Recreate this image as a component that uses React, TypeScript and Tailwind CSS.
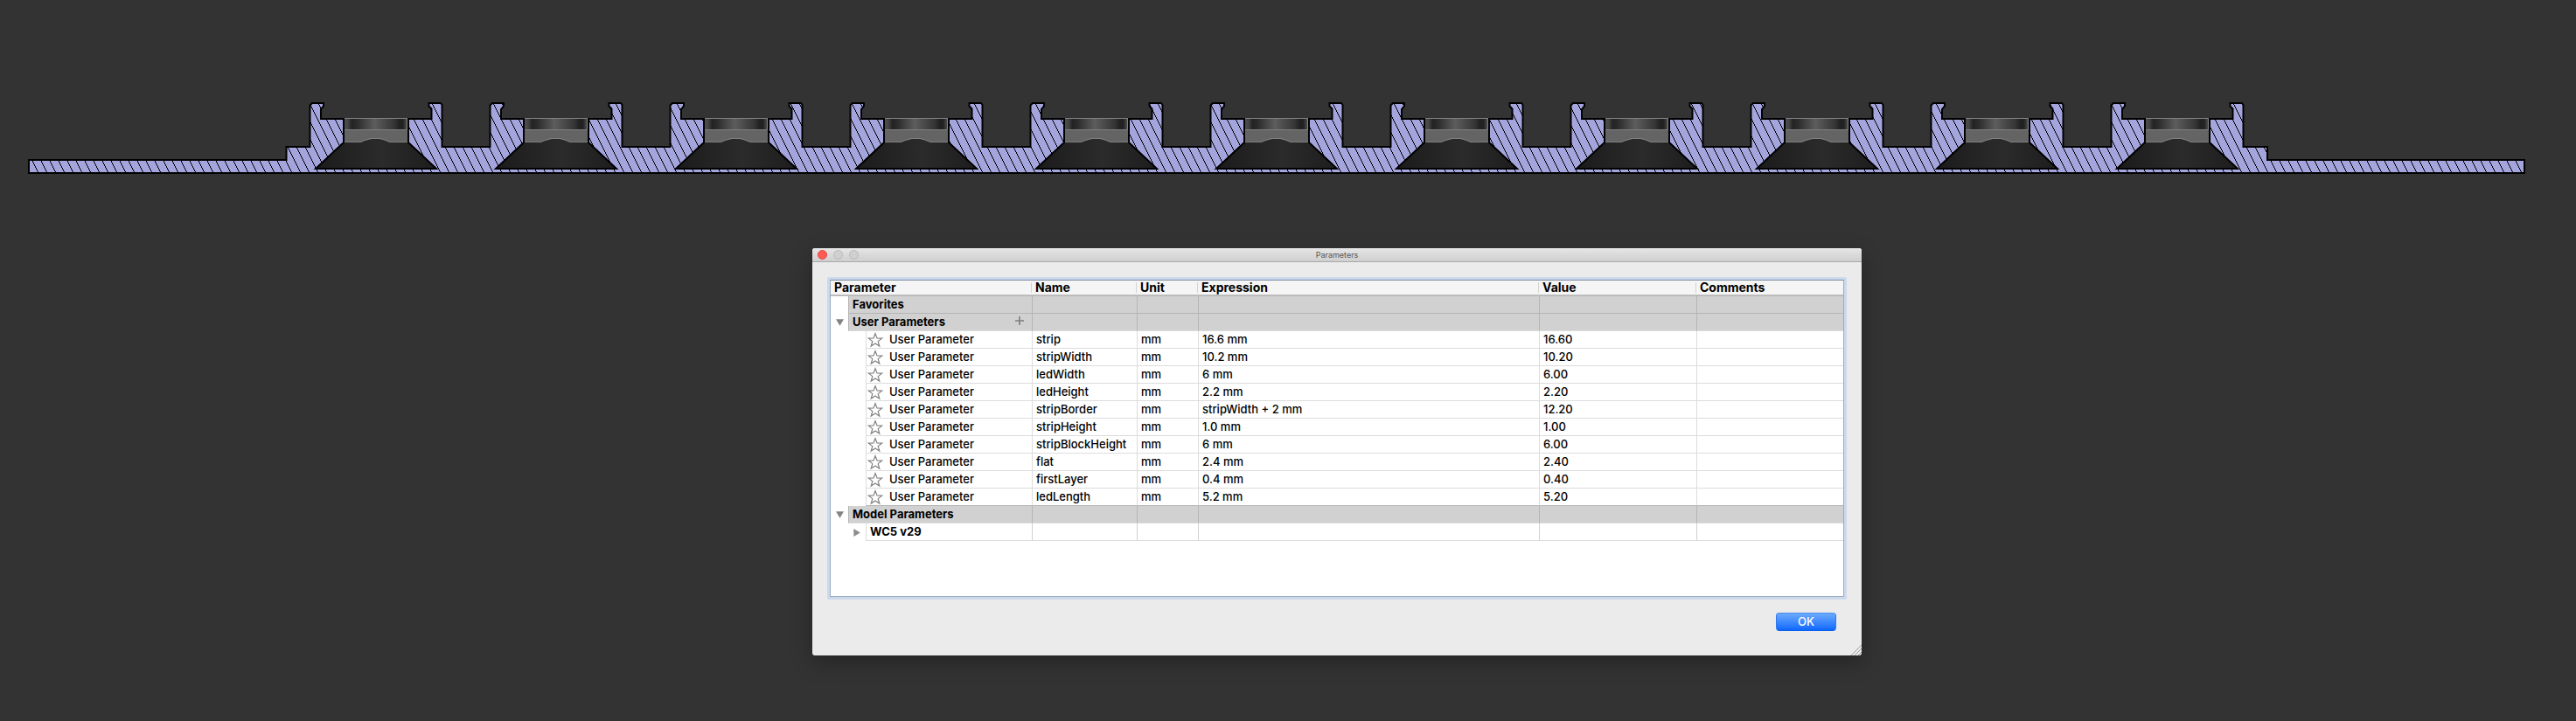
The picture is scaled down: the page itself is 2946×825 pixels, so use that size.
const PITCH = 206;
const CELLS = Array.from({ length: 11 }, (_, i) => i * PITCH);

const outline = [
  'M33 198V183H327.5V168',
  ...CELLS.map(
    (x) =>
      `H${354.5 + x}V120.5L${357 + x} 118H${370 + x}V121.5L${367 + x} 125V136H${393 + x}V163L${361 + x} 193H${499 + x}L${467 + x} 163V136H${493.5 + x}V124.5L${490.5 + x} 121.5V118H${504 + x}L${505.5 + x} 120V168`,
  ),
  'H2593V183H2887V198Z',
].join('');

// The cavity floor leaves a thin web below it, so the fill is built from the solid
// body with the cavities taken out.
const SLOPE = 0.5;
const HATCH = Array.from({ length: 300 }, (_, i) => -56 + i * 10)
  .map((x) => `M${x + 43 - (184 - 116) * SLOPE} 116L${x + 43 + (200 - 184) * SLOPE} 200`)
  .join('');

function Section() {
  return (
    <svg className="block h-[284px] w-[2946px] shrink-0" viewBox="0 0 2946 284">
      <defs>
        <clipPath id="body">
          <path d={outline} />
        </clipPath>
        <linearGradient id="ring">
          <stop offset="0" stopColor="#4c4c4c" />
          <stop offset=".05" stopColor="#474747" />
          <stop offset=".12" stopColor="#232323" />
          <stop offset=".2" stopColor="#2b2b2b" />
          <stop offset=".48" stopColor="#5d5d5d" />
          <stop offset=".8" stopColor="#353535" />
          <stop offset=".88" stopColor="#222222" />
          <stop offset=".94" stopColor="#222222" />
          <stop offset="1" stopColor="#4c4c4c" />
        </linearGradient>
        <linearGradient id="cone">
          <stop offset="0" stopColor="#1b1b1b" />
          <stop offset=".55" stopColor="#2b2b2b" />
          <stop offset="1" stopColor="#1d1d1d" />
        </linearGradient>
      </defs>
      {CELLS.map((x) => (
        <g key={x} transform={`translate(${x} 0)`}>
          <rect x="394" y="135" width="72" height="28" fill="#646464" />
          <rect x="394" y="135" width="71" height="13" fill="url(#ring)" />
          <path d="M394 135.5H465.5V148.5H394" fill="none" stroke="#808080" strokeWidth="1" />
          <path d="M393 163H412L417 161L425 159H434L440 160.5L446 163H467L499 193H361Z" fill="url(#cone)" />
          <path
            d="M394 162.5H412.5L417 160.5L424 158.5H435L440 160L446 162.5H466"
            fill="none"
            stroke="#808080"
            strokeWidth="1"
          />
        </g>
      ))}
      <path d={outline} fill="#a5a5de" />
      <g clipPath="url(#body)">
        <path d={HATCH} stroke="#000" strokeWidth="1" shapeRendering="crispEdges" />
      </g>
      <path d={outline} fill="none" stroke="#000" strokeWidth="2" />
    </svg>
  );
}

function Star() {
  return (
    <svg className="h-[18px] w-[18px] shrink-0" viewBox="0 0 18 18">
      <path
        d="M9 1.6L11 6.9L16.6 7.1L12.2 10.6L13.8 16L9 12.9L4.2 16L5.8 10.6L1.4 7.1L7 6.9Z"
        fill="#fff"
        stroke="#828282"
        strokeWidth="1.2"
      />
    </svg>
  );
}

function Plus() {
  return (
    <svg className="mr-[9px] mb-[3px] h-[10px] w-[10px]" viewBox="0 0 10 10">
      <path d="M0 5H10M5 0V10" stroke="#7d7d7d" strokeWidth="1.6" />
    </svg>
  );
}

const COLS = 'grid grid-cols-[230px_120px_70px_390px_180px_168px]';

type Row = { name: string; expression: string; value: string };

const ROWS: Row[] = [
  { name: 'strip', expression: '16.6 mm', value: '16.60' },
  { name: 'stripWidth', expression: '10.2 mm', value: '10.20' },
  { name: 'ledWidth', expression: '6 mm', value: '6.00' },
  { name: 'ledHeight', expression: '2.2 mm', value: '2.20' },
  { name: 'stripBorder', expression: 'stripWidth + 2 mm', value: '12.20' },
  { name: 'stripHeight', expression: '1.0 mm', value: '1.00' },
  { name: 'stripBlockHeight', expression: '6 mm', value: '6.00' },
  { name: 'flat', expression: '2.4 mm', value: '2.40' },
  { name: 'firstLayer', expression: '0.4 mm', value: '0.40' },
  { name: 'ledLength', expression: '5.2 mm', value: '5.20' },
];

function GroupRow({ title, open, add, last }: { title: string; open?: boolean; add?: boolean; last?: string }) {
  const edge = last ?? 'border-b-[#dcdcdc]';
  const cell = `border-b border-l border-l-[#b5b5b5] bg-[#d1d1d1] ${edge}`;
  return (
    <div className={`${COLS} h-5`}>
      <div className="flex">
        <div className="flex w-5 items-center justify-center">
          {open && (
            <svg className="ml-px h-2 w-[9px]" viewBox="0 0 9 8">
              <path d="M0 .3H9L4.5 7.8Z" fill="#838383" />
            </svg>
          )}
        </div>
        <div className={`flex flex-1 items-center justify-between pl-1 text-[13px] font-bold ${cell}`}>
          <span>{title}</span>
          {add && <Plus />}
        </div>
      </div>
      <div className={cell} />
      <div className={cell} />
      <div className={cell} />
      <div className={cell} />
      <div className={cell} />
    </div>
  );
}

function ParameterRow({ row, edge }: { row: Row; edge: string }) {
  const cell = `flex items-center border-b border-l border-l-[#dcdcdc] pl-1 ${edge}`;
  return (
    <div className={`${COLS} h-5 text-[13px] font-medium`}>
      <div className="flex pl-10">
        <div className={`flex flex-1 items-center border-b border-l border-l-[#dcdcdc] pl-px ${edge}`}>
          <Star />
          <span className="pl-[7px]">User Parameter</span>
        </div>
      </div>
      <div className={cell}>{row.name}</div>
      <div className={cell}>mm</div>
      <div className={cell}>{row.expression}</div>
      <div className={cell}>{row.value}</div>
      <div className={cell} />
    </div>
  );
}

function Header() {
  const titles = ['Parameter', 'Name', 'Unit', 'Expression', 'Value', 'Comments'];
  return (
    <div className={`${COLS} h-[18px] border-b border-[#b5b5b5] bg-[#f5f5f5] text-[14px] font-bold`}>
      {titles.map((title, i) => (
        <div
          key={title}
          className={`flex items-center border-b border-b-[#c4c4c4] ${i === 0 ? 'pl-1' : '-ml-px'}`}
        >
          {i > 0 && <div className="mr-1 h-3 w-px bg-[#d4d4d4]" />}
          <span>{title}</span>
        </div>
      ))}
    </div>
  );
}

function Dialog() {
  return (
    <div className="ml-[929px] flex h-[466px] w-[1200px] flex-col rounded-[3px] bg-[#ebebeb] shadow-[0_8px_24px_rgba(0,0,0,0.3)]">
      <div className="flex h-4 items-center rounded-t-[3px] border-b border-[#a9a9a9] bg-linear-to-b from-[#e6e6e6] to-[#cfcfcf]">
        <div className="flex w-20 gap-[7px] pl-[6px]">
          <div className="h-[11px] w-[11px] rounded-full border border-[#e2463f] bg-[#ff5b54]" />
          <div className="h-[11px] w-[11px] rounded-full border border-[#b9b9b9] bg-[#d0d0d0]" />
          <div className="h-[11px] w-[11px] rounded-full border border-[#b9b9b9] bg-[#d0d0d0]" />
        </div>
        <div className="flex-1 text-center text-[9px] leading-none text-[#555]">Parameters</div>
        <div className="w-20" />
      </div>
      <div className="mx-[17px] mt-[17px] h-[369px] rounded-[2px] bg-[#ccd9ec] p-[3px]">
        <div className="h-full border border-t-[#7b8a9f] border-x-[#9babc2] border-b-[#9babc2] bg-white">
          <Header />
          <GroupRow title="Favorites" last="border-b-[#b5b5b5]" />
          <GroupRow title="User Parameters" open add />
          {ROWS.map((row, i) => (
            <ParameterRow
              key={row.name}
              row={row}
              edge={i === ROWS.length - 1 ? 'border-b-[#b5b5b5]' : 'border-b-[#dcdcdc]'}
            />
          ))}
          <GroupRow title="Model Parameters" open />
          <div className={`${COLS} h-5`}>
            <div className="flex">
              <div className="flex w-10 items-center justify-end pr-[6px]">
                <svg className="h-[9px] w-[8px]" viewBox="0 0 8 9">
                  <path d="M.3 0V9L7.8 4.5Z" fill="#8c8c8c" />
                </svg>
              </div>
              <div className="flex flex-1 items-center border-b border-l border-[#dcdcdc] pl-1 text-[13px] font-bold">
                WC5 v29
              </div>
            </div>
            <div className="border-b border-l border-b-[#dcdcdc] border-l-[#d0d0d0]" />
            <div className="border-b border-l border-b-[#dcdcdc] border-l-[#d0d0d0]" />
            <div className="border-b border-l border-b-[#dcdcdc] border-l-[#d0d0d0]" />
            <div className="border-b border-l border-b-[#dcdcdc] border-l-[#d0d0d0]" />
            <div className="border-b border-l border-b-[#dcdcdc] border-l-[#d0d0d0]" />
          </div>
        </div>
      </div>
      <div className="mt-[15px] flex flex-1 items-start justify-end">
        <button className="mr-[16px] h-[21px] w-[69px] rounded-[4px] border border-t-[#4a8fee] border-x-[#2f78ee] border-b-[#0c5fe8] bg-linear-to-b from-[#6aa9fb] to-[#0a67ff] text-[13px] leading-none font-medium text-white">
          OK
        </button>
        <svg className="h-3 w-[13px] self-end" viewBox="0 0 13 12">
          <path d="M1 12L13 0M5 12L13 4M9 12L13 8" stroke="#9c9c9c" strokeWidth="1" />
        </svg>
      </div>
    </div>
  );
}

export default function App() {
  return (
    <div className="h-[825px] w-[2946px] overflow-hidden bg-[#333333] font-[Inter,sans-serif] leading-none text-black">
      <Section />
      <Dialog />
    </div>
  );
}
